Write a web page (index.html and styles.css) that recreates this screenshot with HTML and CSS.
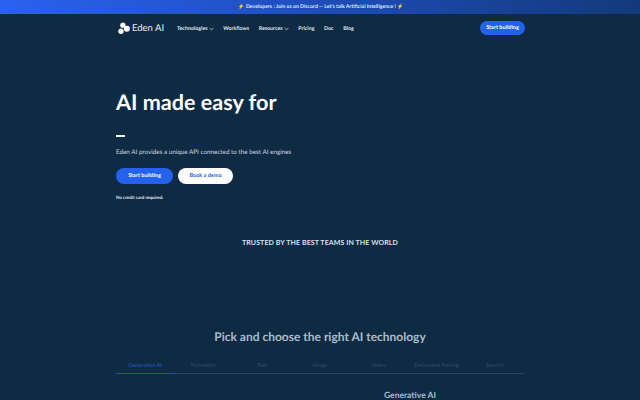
FILE: index.html
```html
<!DOCTYPE html>
<html lang="en">
<head>
<meta charset="utf-8">
<title>Eden AI</title>
<link rel="stylesheet" href="styles.css">
</head>
<body>
<div class="banner"><span class="bolt">⚡</span>Developers : Join us on Discord -- Let's talk Artificial Intelligence !<span class="bolt">⚡</span></div>
<div class="page">
  <header class="nav">
    <a class="logo">
      <svg class="logo-mark" viewBox="0 0 16 16" width="12" height="15"><circle cx="6.5" cy="3.6" r="3.5" fill="#fff"/><circle cx="4" cy="11.6" r="3.6" fill="#fff"/><circle cx="11.8" cy="8.2" r="4" fill="#fff"/></svg>
      <span>Eden AI</span>
    </a>
    <nav class="links">
      <a>Technologies<svg class="caret" viewBox="0 0 6 4" width="5" height="4"><path d="M.7.8 3 3.1 5.3.8" fill="none" stroke="currentColor" stroke-width=".9"/></svg></a>
      <a>Workflows</a>
      <a>Resources<svg class="caret" viewBox="0 0 6 4" width="5" height="4"><path d="M.7.8 3 3.1 5.3.8" fill="none" stroke="currentColor" stroke-width=".9"/></svg></a>
      <a>Pricing</a>
      <a>Doc</a>
      <a>Blog</a>
    </nav>
    <a class="btn btn-blue btn-nav">Start building</a>
  </header>
  <section class="hero">
    <h1>AI made easy for</h1>
    <div class="cursor"></div>
    <p class="lead">Eden AI provides a unique API connected to the best AI engines</p>
    <div class="actions">
      <a class="btn btn-blue btn-hero">Start building</a>
      <a class="btn btn-white btn-hero">Book a demo</a>
    </div>
    <p class="note">No credit card required.</p>
  </section>
  <h2 class="trusted">TRUSTED BY THE BEST TEAMS IN THE WORLD</h2>
  <h2 class="pick">Pick and choose the right AI technology</h2>
  <div class="tabs">
    <a class="tab active">Generative AI</a>
    <a class="tab">Translation</a>
    <a class="tab">Text</a>
    <a class="tab">Image</a>
    <a class="tab">Video</a>
    <a class="tab">Document Parsing</a>
    <a class="tab">Speech</a>
  </div>
  <div class="panel"><h3>Generative AI</h3></div>
</div>
</body>
</html>
```
FILE: styles.css
```css
* { box-sizing: border-box; }
html, body { margin: 0; height: 400px; overflow: hidden; }
body { background: #0f2a43; color: #fff; font-family: Lato, sans-serif; text-rendering: geometricPrecision; }
.banner { height: 14px; display: flex; align-items: center; justify-content: center; padding-left: 2px; background: linear-gradient(90deg, #2a62f0 0%, #1f4fc0 45%, #123a7a 100%); font-size: 5.2px; font-weight: 700; color: #dfe7f7; }
.bolt { font-size: 5px; color: #f4d35e; margin: 0 1px; }
.page { width: 408px; margin: 0 auto; }
.nav { display: flex; align-items: center; height: 28px; padding-left: 2px; margin-right: -1px; }
.logo { display: flex; align-items: center; gap: 2px; font-size: 9.5px; font-weight: 400; color: #e8edf3; width: 59px; flex: none; }
.logo-mark { flex: none; }
.links { display: flex; gap: 9.6px; margin-top: 1px; font-size: 5.3px; font-weight: 700; color: #dfe6ee; flex: 1; }
.links a { display: flex; align-items: center; gap: 1px; }
.btn { display: flex; align-items: center; justify-content: center; border-radius: 8px; font-weight: 700; flex: none; }
.btn-blue { background: #2462ee; color: #fff; }
.btn-white { background: #fff; color: #2a5fd8; }
.btn-nav { width: 45px; height: 14px; font-size: 5.5px; border-radius: 7px; }
.hero { padding-top: 47px; }
h1 { margin: 0; font-size: 21.6px; line-height: 26px; font-weight: 700; color: #fff; }
.cursor { width: 9px; height: 2px; background: #f0f3f6; margin-top: 20px; }
.lead { margin: 11px 0 0; font-size: 6.3px; line-height: 9px; color: #cfd8e2; }
.actions { display: flex; gap: 5px; margin-top: 10px; align-items: center; }
.btn-hero { width: 57px; height: 16px; font-size: 5.5px; }
.btn-white.btn-hero { width: 55px; margin-top: 1px; }
.note { margin: 11px 0 0; font-size: 4.5px; line-height: 6px; color: #e2e7ee; font-weight: 700; }
.trusted { margin: 37px 0 0; text-align: center; font-size: 7px; line-height: 10px; font-weight: 700; color: #d9e0e8; letter-spacing: .1px; }
.pick { margin: 80px 0 0; text-align: center; font-size: 12px; line-height: 18px; font-weight: 700; color: #a9bccb; }
.tabs { display: flex; margin-top: 15px; border-bottom: 1px solid #27455f; height: 13px; }
.tab { flex: 1; text-align: center; font-size: 5.5px; line-height: 11px; color: #33506a; }
.tab.active { color: #1f4fb0; font-weight: 700; border-bottom: 1px solid #1f4fb0; height: 13px; }
.panel { padding-left: 268px; margin-top: 15px; }
h3 { margin: 0; font-size: 8.5px; line-height: 12px; font-weight: 700; color: #a9bccb; }
```
